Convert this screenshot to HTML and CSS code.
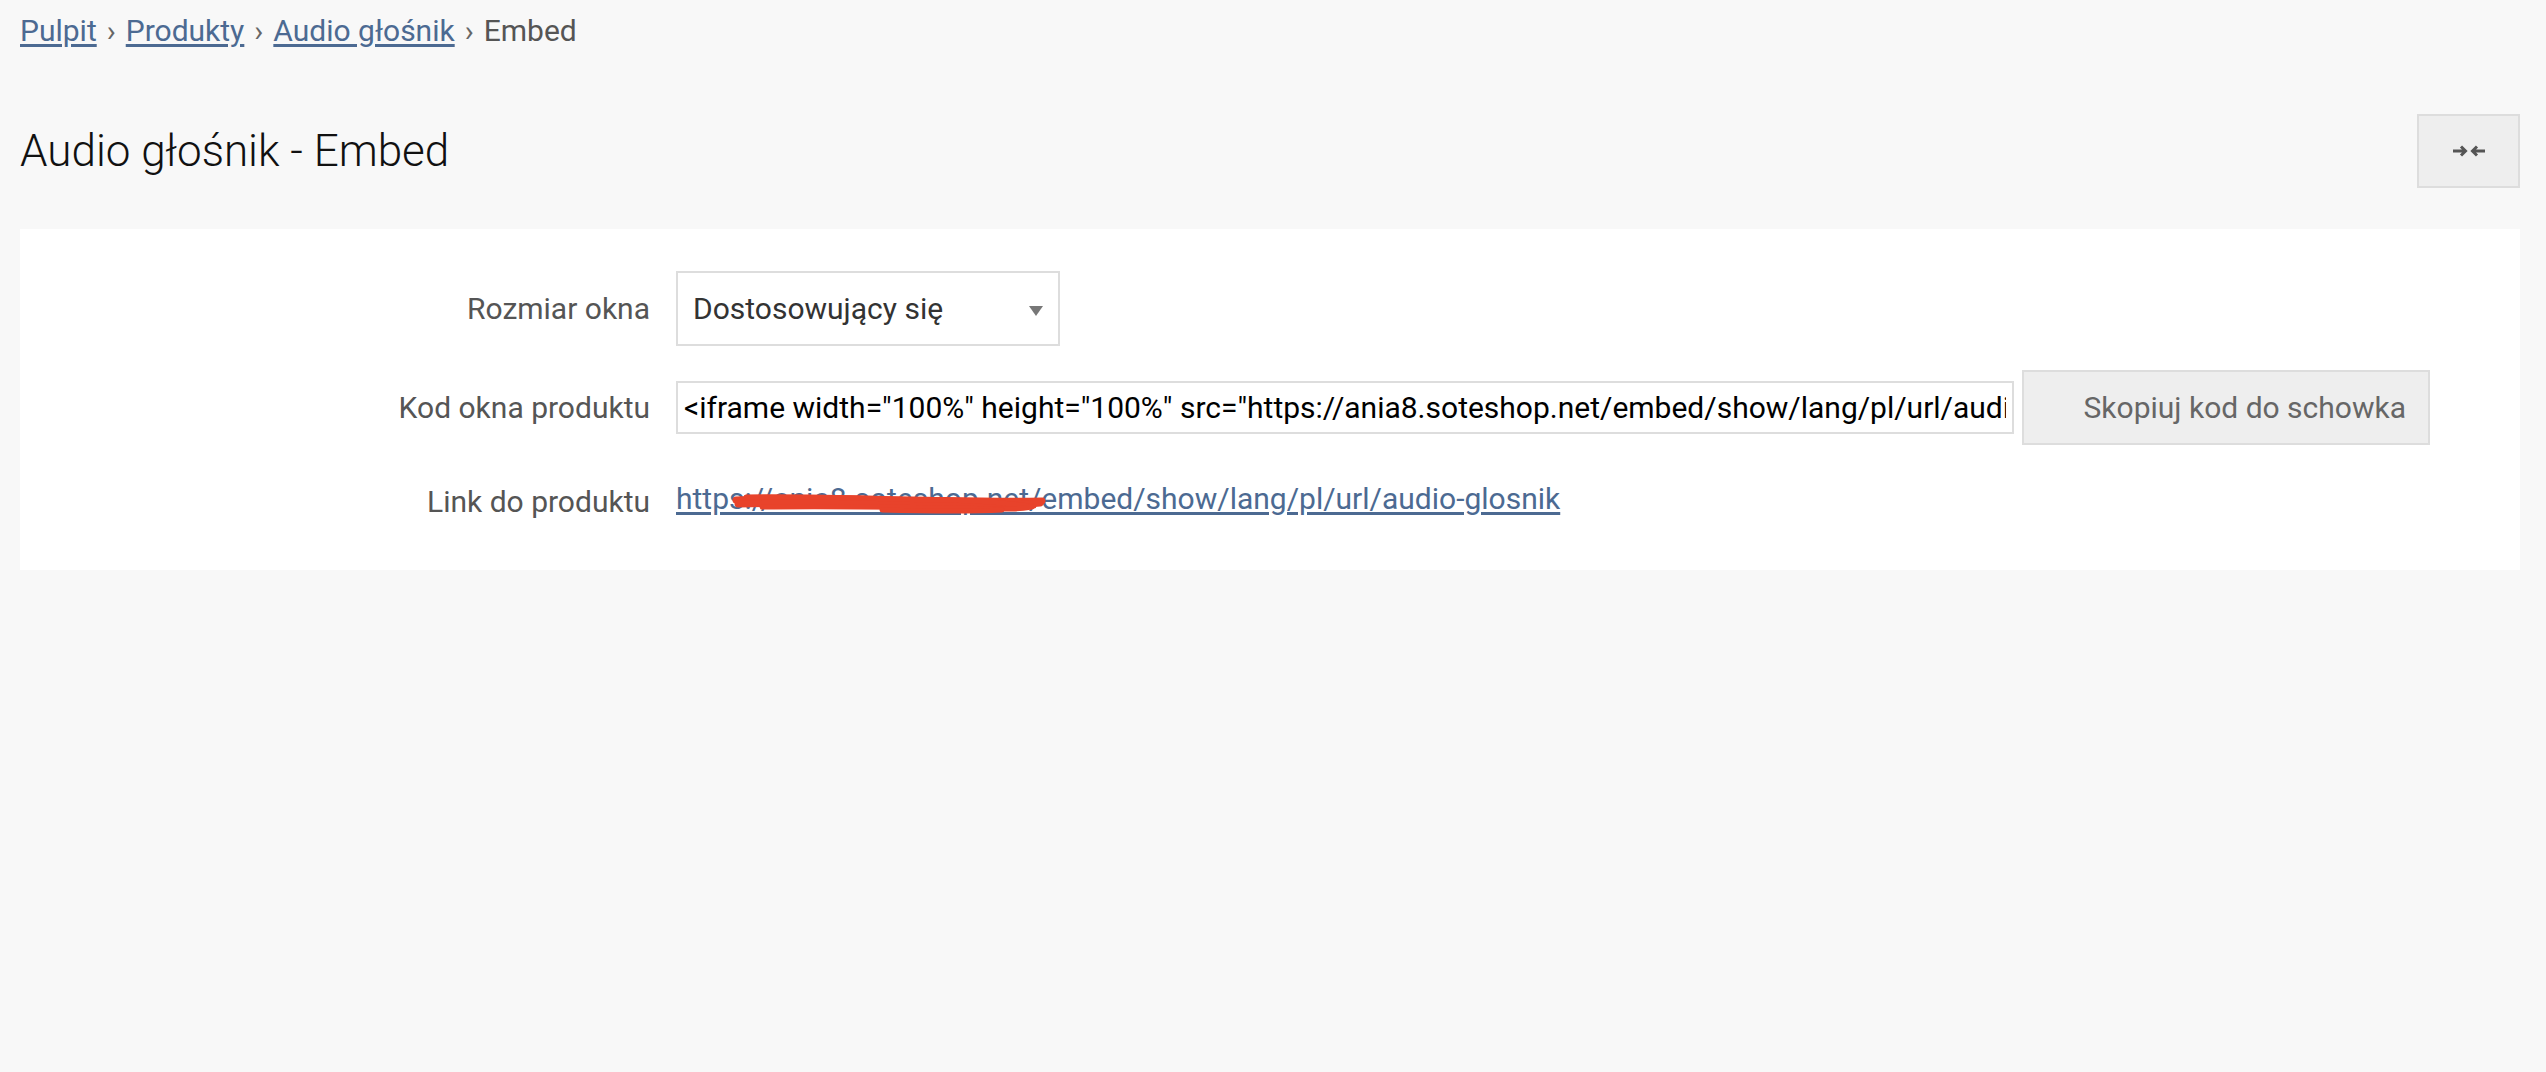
FILE: index.html
```html
<!DOCTYPE html>
<html lang="pl">
<head>
    <meta charset="UTF-8">
    <title>Audio głośnik - Embed</title>
    <link rel="stylesheet" href="styles.css">
</head>
<body>
    <div class="page">
        <div class="breadcrumb">
            <a href="#">Pulpit</a>
            <span class="sep">›</span>
            <a href="#">Produkty</a>
            <span class="sep">›</span>
            <a href="#">Audio głośnik</a>
            <span class="sep">›</span>
            <span class="current">Embed</span>
        </div>

        <div class="title-row">
            <h1>Audio głośnik - Embed</h1>
            <button class="collapse-btn" type="button">
                <svg width="34" height="14" viewBox="0 0 34 14">
                    <path d="M1 7h11M9 2.5l4.5 4.5L9 11.5" fill="none" stroke="#555" stroke-width="3"/>
                    <path d="M33 7H22M25 2.5L20.5 7l4.5 4.5" fill="none" stroke="#555" stroke-width="3"/>
                </svg>
            </button>
        </div>

        <div class="panel">
            <div class="form-row">
                <label>Rozmiar okna</label>
                <div class="select">
                    <span>Dostosowujący się</span>
                    <span class="caret"></span>
                </div>
            </div>
            <div class="form-row">
                <label>Kod okna produktu</label>
                <div class="code-group">
                    <input class="code-input" type="text" value='<iframe width="100%" height="100%" src="https://ania8.soteshop.net/embed/show/lang/pl/url/audio-glosnik" frameborder="0"></iframe>'>
                    <button class="copy-btn" type="button">Skopiuj kod do schowka</button>
                </div>
            </div>
            <div class="form-row">
                <label>Link do produktu</label>
                <div class="link-wrap">
                    <a href="#">https://ania8.soteshop.net/embed/show/lang/pl/url/audio-glosnik</a>
                    <!-- redacted domain -->
                    <svg class="scribble" width="316" height="26" viewBox="0 0 316 26">
                        <g fill="none" stroke="#e8432b" stroke-linecap="round">
                            <path d="M4 9 C60 6 120 8 180 9 S270 11 310 10" stroke-width="7"/>
                            <path d="M6 13 C70 11 140 12 200 13 S280 15 308 12" stroke-width="7"/>
                            <path d="M14 6 C90 5 150 8 210 9 S270 13 302 15" stroke-width="5"/>
                            <path d="M30 16 C100 15 160 16 220 17 S280 19 300 16" stroke-width="5"/>
                            <path d="M150 19 C190 20 230 21 270 19" stroke-width="5"/>
                        </g>
                    </svg>
                </div>
            </div>
        </div>
    </div>
</body>
</html>
```

FILE: styles.css
```css
html, body{
    margin: 0;
    padding: 0;
    background: #f8f8f8;
    font-family: Roboto, "Liberation Sans", sans-serif;
    color: #555;
}
.page{
    padding: 0 26px 0 20px;
}

.breadcrumb{
    padding-top: 11px;
    font-size: 30px;
    line-height: 40px;
    display: flex;
    gap: 10px;

    a{
        color: #4c6a92;
        text-decoration: underline;
        text-underline-offset: 3px;
    }
    .sep{
        color: #666;
    }
    .current{
        color: #555;
    }
}

.title-row{
    display: flex;
    justify-content: space-between;
    align-items: center;
    margin-top: 63px;

    h1{
        margin: 0;
        font-size: 44px;
        font-weight: 300;
        color: #111;
        line-height: 74px;
    }
}
.collapse-btn{
    width: 103px;
    height: 74px;
    background: #eee;
    border: 2px solid #ddd;
    display: flex;
    justify-content: center;
    align-items: center;
    padding: 0;
}

.panel{
    margin-top: 41px;
    background: #fff;
    padding: 42px 0 36px 0;
}
.form-row{
    display: grid;
    grid-template-columns: 630px 1fr;
    column-gap: 26px;
    align-items: center;
    margin-bottom: 24px;

    label{
        text-align: right;
        font-size: 30px;
        color: #555;
    }
}
.form-row:last-child{
    margin-bottom: 0;
}

.select{
    box-sizing: border-box;
    width: 384px;
    height: 75px;
    border: 2px solid #ddd;
    background: #fff;
    padding: 0 15px;
    display: flex;
    align-items: center;
    justify-content: space-between;
    font-size: 30px;
    color: #333;

    .caret{
        width: 0;
        height: 0;
        border-left: 7px solid transparent;
        border-right: 7px solid transparent;
        border-top: 10px solid #777;
        margin-top: 4px;
    }
}

.code-group{
    display: flex;
    align-items: center;
    gap: 8px;
}
.code-input{
    box-sizing: border-box;
    width: 1338px;
    height: 53px;
    border: 2px solid #ddd;
    padding: 0 6px;
    font-family: Roboto, "Liberation Sans", sans-serif;
    font-size: 30px;
    color: #000;
    background: #fff;
    outline: none;
}
.copy-btn{
    box-sizing: border-box;
    width: 408px;
    height: 75px;
    background: #eee;
    border: 2px solid #ddd;
    font-family: Roboto, "Liberation Sans", sans-serif;
    font-size: 30px;
    color: #666;
    text-align: right;
    padding: 0 22px 0 0;
}

.link-wrap{
    position: relative;
    line-height: 60px;

    a{
        font-size: 30px;
        color: #4c6a92;
        text-decoration: underline;
        text-underline-offset: 3px;
    }
    .scribble{
        position: absolute;
        left: 56px;
        top: 22px;
    }
}
```
